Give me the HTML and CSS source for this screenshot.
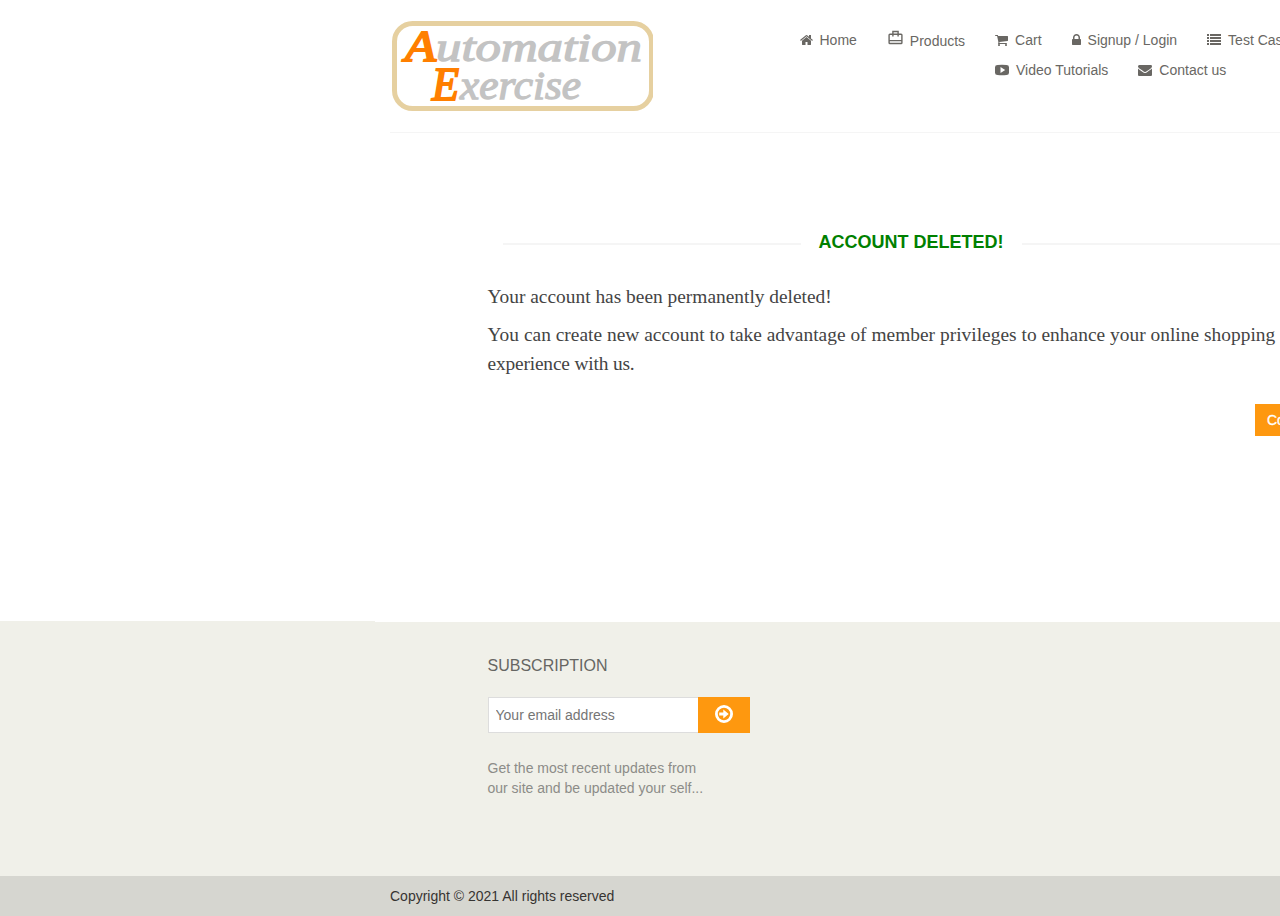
FILE: index.html
```html
<!DOCTYPE html>
<html lang="en">
<head>
<meta charset="utf-8">
<title>Automation Exercise - Account Deleted</title>
<link rel="stylesheet" href="styles.css">
</head>
<body>
<div class="page">
  <header class="header">
    <div class="header-inner">
      <a class="logo" aria-label="Automation Exercise">
        <svg width="263" height="95" viewBox="0 0 263 95">
          <rect x="4.5" y="4.5" width="257" height="85" rx="18" fill="none" stroke="#e6d0a0" stroke-width="5"/>
          <g class="logo-text">
            <text x="15" y="42" class="logo-cap" font-size="45" textLength="31" lengthAdjust="spacingAndGlyphs">A</text>
            <text x="46" y="42" font-size="41" textLength="206" lengthAdjust="spacingAndGlyphs">utomation</text>
            <text x="42" y="81" class="logo-cap" font-size="47" textLength="27" lengthAdjust="spacingAndGlyphs">E</text>
            <text x="70" y="80" font-size="41" textLength="121" lengthAdjust="spacingAndGlyphs">xercise</text>
          </g>
        </svg>
      </a>
      <nav class="nav">
        <div class="nav-row">
          <a class="nav-item"><svg class="icon icon-home" viewBox="64 0 1664 1792"><path d="M1472 992v480q0 26-19 45t-45 19h-384v-384h-256v384h-384q-26 0-45-19t-19-45v-480q0-1 .5-3t.5-3l575-474 575 474q1 2 1 6zm223-69l-62 74q-8 9-21 11h-3q-13 0-21-7l-692-577-692 577q-12 8-24 7-13-2-21-11l-62-74q-8-10-7-23.5t11-21.5l719-599q32-26 76-26t76 26l244 204v-195q0-14 9-23t23-9h192q14 0 23 9t9 23v408l219 182q10 8 11 21.5t-7 23.5z"/></svg>Home</a>
          <a class="nav-item nav-products"><svg class="icon icon-case" viewBox="0 0 16 16"><path fill="none" stroke="currentColor" stroke-width="1.4" d="M2.9 4.2h11.2q.8 0 .8.8v7.7q0 .8-.8.8H2.9q-.8 0-.8-.8V5q0-.8.8-.8zM5.9 6.4V1.5h5.2v4.9M2.1 10.6h12.8"/></svg>Products</a>
          <a class="nav-item"><svg class="icon icon-cart" viewBox="64 0 1664 1792"><path d="M704 1536q0 52-38 90t-90 38-90-38-38-90 38-90 90-38 90 38 38 90zm896 0q0 52-38 90t-90 38-90-38-38-90 38-90 90-38 90 38 38 90zm128-1088v512q0 24-16.5 42.5t-40.5 21.5l-1044 122q13 60 13 70 0 16-24 64h920q26 0 45 19t19 45-19 45-45 19h-1024q-26 0-45-19t-19-45q0-11 8-31.5t16-36 21.5-40 15.5-29.5l-177-823h-204q-26 0-45-19t-19-45 19-45 45-19h256q16 0 28.5 6.5t19.5 15.5 13 24.5 8 26 5.5 29.5 4.5 26h1201q26 0 45 19t19 45z"/></svg>Cart</a>
          <a class="nav-item"><svg class="icon icon-lock" viewBox="320 0 1152 1792"><path d="M640 768h512v-192q0-106-75-181t-181-75-181 75-75 181v192zm832 96v576q0 40-28 68t-68 28h-960q-40 0-68-28t-28-68v-576q0-40 28-68t68-28h32v-192q0-184 132-316t316-132 316 132 132 316v192h32q40 0 68 28t28 68z"/></svg>Signup / Login</a>
          <a class="nav-item"><svg class="icon icon-list" viewBox="0 0 14 14"><path d="M0 1h2v2H0zM3 1h11v2H3zM0 4h2v2H0zM3 4h11v2H3zM0 7h2v2H0zM3 7h11v2H3zM0 10h2v2H0zM3 10h11v2H3z"/></svg>Test Cases</a>
        </div>
        <div class="nav-row nav-row-second">
          <a class="nav-item"><svg class="icon icon-video" viewBox="0 0 14 14"><path fill-rule="evenodd" d="M2.5 2Q7 1.6 11.5 2 14 2 14 4.2 14.2 7 14 9.8 14 12 11.5 12 7 12.4 2.5 12 0 12 0 9.8-.2 7 0 4.2 0 2 2.5 2zM5.5 4v6l4.7-3z"/></svg>Video Tutorials</a>
          <a class="nav-item"><svg class="icon icon-mail" viewBox="0 0 1792 1792"><path d="M1792 710v794q0 66-47 113t-113 47h-1472q-66 0-113-47t-47-113v-794q44 49 101 87 362 246 497 345 57 42 92.5 65.5t94.5 48 110 24.5h2q51 0 110-24.5t94.5-48 92.5-65.5q170-123 498-345 57-39 100-87zm0-294q0 79-49 151t-122 123q-376 261-468 325-10 7-42.5 31t-54 38.5-52 32.5-57.5 27-50 9h-2q-23 0-50-9t-57.5-27-52-32.5-54-38.5-42.5-31q-91-64-262-182.5t-205-142.5q-62-42-117-115.5t-55-136.5q0-78 41.5-130t118.5-52h1472q65 0 112.5 47t47.5 113z"/></svg>Contact us</a>
        </div>
      </nav>
    </div>
  </header>

  <main class="content">
    <h2 class="title"><span class="rule rule-left"></span><b>Account Deleted!</b><span class="rule rule-right"></span></h2>
    <p class="message message-short">Your account has been permanently deleted!</p>
    <p class="message message-long">You can create new account to take advantage of member privileges to enhance your online shopping<br><span class="message-end">experience with us.</span></p>
    <div class="actions"><a class="btn">Continue</a></div>
  </main>

  <footer class="footer">
    <div class="footer-lead"></div>
    <div class="footer-widget">
      <h2 class="footer-title">Subscription</h2>
      <form class="subscribe">
        <input class="email" type="email" placeholder="Your email address">
        <button class="send" type="button" aria-label="Subscribe"><svg width="18" height="18" viewBox="0 0 18 18"><circle cx="9" cy="9" r="7.6" fill="none" stroke="#fff" stroke-width="2.8"/><path fill="#fff" d="M4.2 7.4h4.1V4.4L13.7 9l-5.4 4.6v-3H4.2z"/></svg></button>
      </form>
      <p class="footer-note">Get the most recent updates from <br>our site and be updated your self...</p>
    </div>
    <div class="copyright"><p>Copyright © 2021 All rights reserved</p></div>
  </footer>
</div>
</body>
</html>
```
FILE: styles.css
```css
* { box-sizing: border-box; }
body { margin: 0; overflow: hidden; background: #fff; font-family: "Liberation Sans", Arial, sans-serif; font-size: 14px; line-height: 20px; }
p, h2 { margin: 0; }
.page { width: 1920px; height: 916px; display: flex; flex-direction: column; }
.header { height: 133px; padding: 0 390px; }
.header-inner { width: 1140px; height: 133px; border-bottom: 1px solid #f5f5f5; display: flex; align-items: flex-start; }
.logo { display: block; width: 267px; height: 95px; margin-top: 19px; }
.logo svg { display: block; }
.logo-text { font-family: "Liberation Serif", serif; font-style: italic; fill: #c3c3c3; stroke: #c3c3c3; stroke-width: 1.3; }
.logo-cap { fill: #ff7f00; stroke: #ff7f00; stroke-width: 2; }
.nav { margin: 30px 0 0 142.5px; color: #696763; }
.nav-row { display: flex; gap: 30px; height: 30px; align-items: flex-start; }
.nav-row-second { padding-left: 195.5px; }
.nav-item { display: flex; white-space: nowrap; }
.icon { display: block; flex: none; height: 14px; margin: 3px 7px 0 0; fill: currentColor; }
.icon-home, .icon-cart { width: 13px; }
.icon-lock { width: 9px; }
.icon-list, .icon-video, .icon-mail { width: 14px; }
.icon-case { width: 16px; height: 16px; margin: -1px 7px 0 0; }
.nav-products { padding-top: 1px; }
.content { height: 488px; padding: 99px 487.5px 0; }
.title { display: flex; align-items: center; height: 20px; padding: 0 15px; font-size: 18px; color: green; text-transform: uppercase; }
.title b { padding: 0 18px; }
.rule { height: 2px; margin-top: 4px; background: #f5f5f5; }
.rule-left { width: 298px; flex: none; }
.rule-right { flex: 1; }
.message { font-family: "Liberation Serif", serif; font-size: 19.4px; line-height: 29px; color: #444; white-space: nowrap; }
.message-short { margin-top: 30px; }
.message-long { margin-top: 9px; letter-spacing: 0.02px; }
.message-end { letter-spacing: -0.17px; }
.actions { display: flex; justify-content: flex-end; margin-top: 26px; }
.btn { width: 84px; margin-right: 93.5px; height: 32px; padding: 6px 12px; background: #fe980f; color: #fff; -webkit-text-stroke: 0.3px #fff; }
.footer { flex: 1; background: #f0f0e9; display: flex; flex-direction: column; }
.footer-lead { height: 1px; margin-left: 375px; background: #fff; }
.footer-widget { height: 254px; padding: 34px 0 0 487.5px; }
.footer-title { color: #666663; font-size: 16px; font-weight: 400; line-height: 20px; text-transform: uppercase; }
.subscribe { display: flex; margin-top: 21px; }
.email { width: 211px; height: 36px; border: 1px solid #ddd; padding: 7px; font: 14px/20px "Liberation Sans", Arial, sans-serif; border-radius: 0; background: #fff; }
.email::placeholder { color: #757575; }
.send { width: 52px; height: 36px; border: 0; padding: 0 0 2px; background: #fe980f; display: flex; align-items: center; justify-content: center; margin-left: -1px; }
.footer-note { margin-top: 25px; color: #8c8c88; }
.copyright { height: 40px; padding: 10px 390px; background: #d6d6d0; color: #363432; }
```
